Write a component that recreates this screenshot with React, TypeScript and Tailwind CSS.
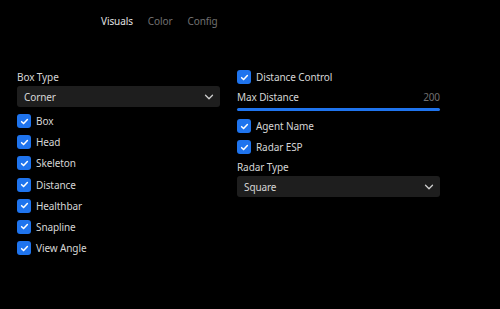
import React from "react";

const Check = ({ label }: { label: string }) => (
  <div className="flex items-center h-[14px] gap-[5px]">
    <div className="w-[14px] h-[14px] rounded-[3px] bg-[#1f74ee] flex items-center justify-center shrink-0">
      <svg width="9" height="9" viewBox="0 0 10 10" fill="none">
        <path d="M1.8 5.2 L4 7.3 L8.2 2.8" stroke="white" strokeWidth="1.7" strokeLinecap="round" strokeLinejoin="round" />
      </svg>
    </div>
    <span className="text-[10px] tracking-[-0.1px] text-[#d6d6d6] leading-none">{label}</span>
  </div>
);

const Select = ({ value }: { value: string }) => (
  <div className="h-[21px] rounded-[3px] bg-[#1e1e1e] flex items-center justify-between pl-[7px] pr-[6px]">
    <span className="text-[10px] tracking-[-0.1px] text-[#d6d6d6] leading-none">{value}</span>
    <svg width="10" height="10" viewBox="0 0 10 10" fill="none">
      <path d="M1.5 3.2 L5 6.7 L8.5 3.2" stroke="#cfcfcf" strokeWidth="1.3" strokeLinecap="round" strokeLinejoin="round" />
    </svg>
  </div>
);

export default function App() {
  return (
    <div
      className="w-[500px] h-[309px] bg-black overflow-hidden"
      style={{ fontFamily: '"Noto Sans", "Open Sans", sans-serif' }}
    >
      <div className="flex gap-[15px] pl-[101px] pt-[14px] h-[28px] items-center text-[10px] tracking-[-0.1px] leading-none">
        <span className="text-[#e2e2e2]">Visuals</span>
        <span className="text-[#707070]">Color</span>
        <span className="text-[#707070]">Config</span>
      </div>
      <div className="flex gap-[17px] px-[17px] pt-[42px]">
        <div className="w-[203px] flex flex-col">
          <div className="h-[14px] flex items-center text-[10px] tracking-[-0.1px] text-[#d6d6d6] leading-none">Box Type</div>
          <div className="mt-[2px]">
            <Select value="Corner" />
          </div>
          <div className="flex flex-col gap-[7.2px] mt-[7px]">
            <Check label="Box" />
            <Check label="Head" />
            <Check label="Skeleton" />
            <Check label="Distance" />
            <Check label="Healthbar" />
            <Check label="Snapline" />
            <Check label="View Angle" />
          </div>
        </div>
        <div className="w-[203px] flex flex-col">
          <Check label="Distance Control" />
          <div className="mt-[6px] h-[14px] flex items-center justify-between text-[10px] tracking-[-0.1px] leading-none">
            <span className="text-[#d6d6d6]">Max Distance</span>
            <span className="text-[#707070]">200</span>
          </div>
          <div className="mt-[4px] h-[3px] rounded-full bg-[#1f74ee]" />
          <div className="mt-[8px] flex flex-col gap-[7px]">
            <Check label="Agent Name" />
            <Check label="Radar ESP" />
          </div>
          <div className="mt-[6px] h-[14px] flex items-center text-[10px] tracking-[-0.1px] text-[#d6d6d6] leading-none">Radar Type</div>
          <div className="mt-[2px]">
            <Select value="Square" />
          </div>
        </div>
      </div>
    </div>
  );
}
